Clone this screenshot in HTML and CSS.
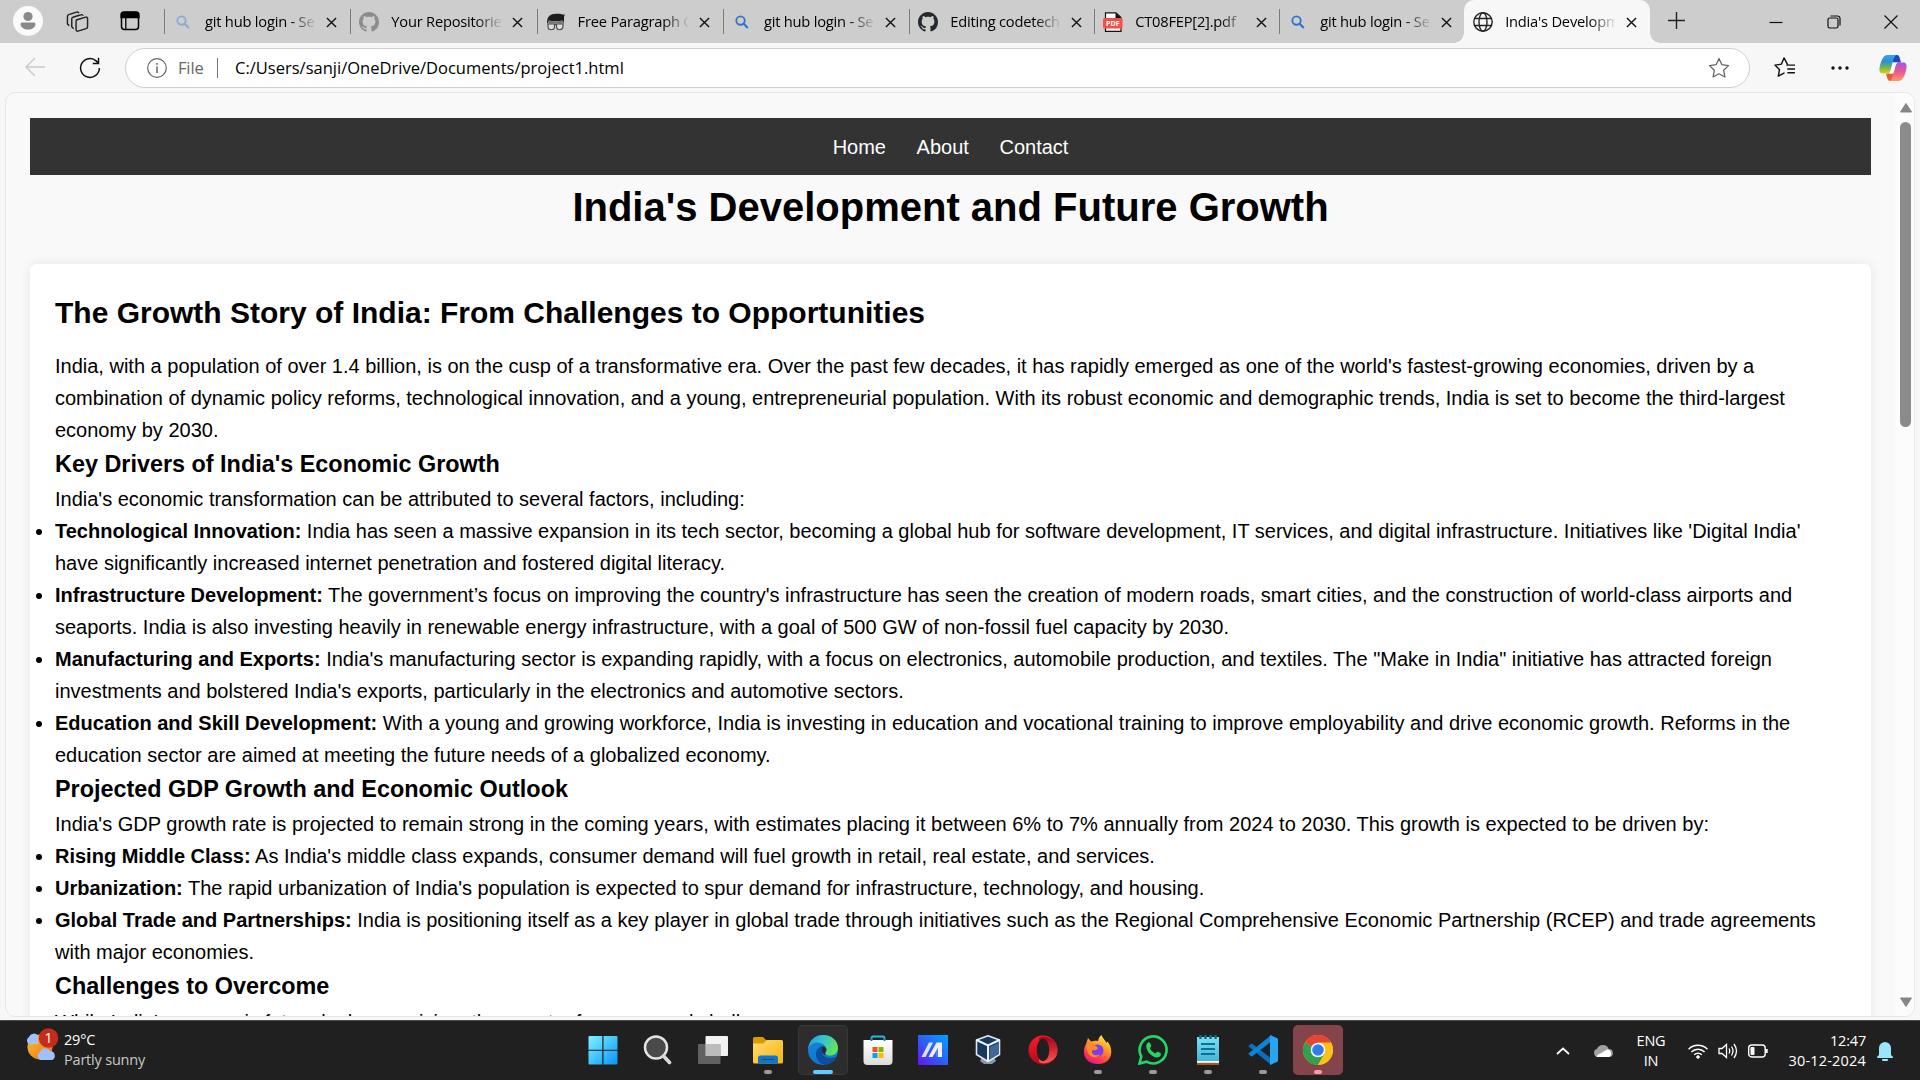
FILE: index.html
```html
<!DOCTYPE html>
<html lang="en">
<head>
<meta charset="utf-8">
<title>India's Development and Future Growth</title>
<link rel="stylesheet" href="styles.css">
</head>
<body>
<svg width="0" height="0" class="defs">
  <defs>
    <linearGradient id="win" x1="0" y1="0" x2="1" y2="1"><stop offset="0" stop-color="#7df3ff"/><stop offset="1" stop-color="#0a93fb"/></linearGradient>
    <linearGradient id="folder" x1="0" y1="0" x2="1" y2="1"><stop offset="0" stop-color="#ffdc74"/><stop offset="1" stop-color="#fbb30a"/></linearGradient>
    <linearGradient id="edgeTop" x1="0" y1="0" x2="1" y2=".4"><stop offset="0" stop-color="#1d9ee0"/><stop offset=".5" stop-color="#35c1d6"/><stop offset="1" stop-color="#62e35a"/></linearGradient>
    <linearGradient id="edgeLow" x1="0" y1="0" x2="0" y2="1"><stop offset="0" stop-color="#1784d8"/><stop offset="1" stop-color="#0a7ad0"/></linearGradient>
    <linearGradient id="asus" x1="0" y1="1" x2="1" y2="0"><stop offset="0" stop-color="#6412f5"/><stop offset=".5" stop-color="#2a62fb"/><stop offset="1" stop-color="#00a2ff"/></linearGradient>
    <linearGradient id="opera" x1="0" y1="0" x2="0" y2="1"><stop offset="0" stop-color="#ff1b2d"/><stop offset="1" stop-color="#b00a18"/></linearGradient>
    <linearGradient id="operaIn" x1="0" y1="0" x2="0" y2="1"><stop offset="0" stop-color="#a60012"/><stop offset="1" stop-color="#ff5656"/></linearGradient>
    <linearGradient id="fox" x1=".8" y1="0" x2=".3" y2="1"><stop offset="0" stop-color="#fff04a"/><stop offset=".4" stop-color="#ff9a28"/><stop offset=".75" stop-color="#ff3d4d"/><stop offset="1" stop-color="#e31587"/></linearGradient>
    <linearGradient id="note" x1="0" y1="0" x2="0" y2="1"><stop offset="0" stop-color="#7fe0f0"/><stop offset="1" stop-color="#41b5d8"/></linearGradient>
    <linearGradient id="bag" x1="0" y1="0" x2="0" y2="1"><stop offset="0" stop-color="#ffffff"/><stop offset="1" stop-color="#dcdcdc"/></linearGradient>
    <linearGradient id="copA" x1="0" y1="0" x2="0" y2="1"><stop offset="0" stop-color="#35a5ee"/><stop offset=".35" stop-color="#2f8cd6"/><stop offset=".65" stop-color="#63b85b"/><stop offset="1" stop-color="#f4c911"/></linearGradient>
    <linearGradient id="copB" x1="0" y1="0" x2="0" y2="1"><stop offset="0" stop-color="#a055ea"/><stop offset=".5" stop-color="#e8598f"/><stop offset="1" stop-color="#ff9c62"/></linearGradient>
    <linearGradient id="sun" x1="0" y1="0" x2="1" y2="1"><stop offset="0" stop-color="#f5c53b"/><stop offset="1" stop-color="#f06b0a"/></linearGradient>
    <symbol id="mag" viewBox="0 0 16 16"><circle cx="6.3" cy="6.3" r="4.8" fill="none" stroke="currentColor" stroke-width="2.100"/><path d="M9.700 9.700 14.600 14.800" stroke="currentColor" stroke-width="2.500"/></symbol>
    <symbol id="octo" viewBox="0 0 16 16"><path fill="currentColor" d="M8 0C3.58 0 0 3.58 0 8c0 3.54 2.29 6.53 5.47 7.59.4.07.55-.17.55-.38 0-.19-.01-.82-.01-1.49-2.01.37-2.53-.49-2.69-.94-.09-.23-.48-.94-.82-1.13-.28-.15-.68-.52-.01-.53.63-.01 1.08.58 1.23.82.72 1.21 1.87.87 2.33.66.07-.52.28-.87.51-1.07-1.78-.2-3.64-.89-3.64-3.95 0-.87.31-1.59.82-2.15-.08-.2-.36-1.02.08-2.12 0 0 .67-.21 2.2.82.64-.18 1.32-.27 2-.27s1.36.09 2 .27c1.53-1.04 2.2-.82 2.2-.82.44 1.1.16 1.92.08 2.12.51.56.82 1.27.82 2.15 0 3.07-1.87 3.75-3.65 3.95.29.25.54.73.54 1.48 0 1.07-.01 1.93-.01 2.2 0 .21.15.46.55.38A8.01 8.01 0 0 0 16 8c0-4.42-3.58-8-8-8z"/></symbol>
    <symbol id="x" viewBox="0 0 12 12"><path d="M1 1 11 11M11 1 1 11" stroke="currentColor" stroke-width="1.5" fill="none"/></symbol>
  </defs>
</svg>

<header class="tabstrip">
  <div class="tools">
    <svg class="avatar" viewBox="0 0 30 30"><circle cx="15" cy="15" r="15" fill="#fafafa"/><circle cx="15" cy="10.500" r="4.600" fill="#8a8a8a"/><path d="M9 16.500h12a1.500 1.500 0 0 1 1.500 1.500c0 3.500-3.500 5.500-7.500 5.500S7.500 21.500 7.500 18A1.500 1.500 0 0 1 9 16.500z" fill="#8a8a8a"/></svg>
    <svg class="collections" viewBox="0 0 24 24" fill="none" stroke="#222" stroke-width="1.500"><path d="M11.500 10.200 20.500 7.500a1.500 1.500 0 0 1 2 1.500v8.500a2 2 0 0 1-1.500 1.900L12.500 22a1.500 1.500 0 0 1-2-1.500v-8.800a1.500 1.500 0 0 1 1-1.500z"/><path d="M8 19.500 6 17.500V9.500a2 2 0 0 1 1.300-2L15.500 5a2 2 0 0 1 2.500 1"/><path d="M3.500 16.500 1.500 14.500V6.800a2 2 0 0 1 1.300-2L11 2.200a2 2 0 0 1 2.500 1"/></svg>
    <svg class="vtabs" viewBox="0 0 20 20"><rect x="1.500" y="1.500" width="17" height="17" rx="3" fill="none" stroke="#000" stroke-width="1.500"/><path d="M1 6.500V4a3 3 0 0 1 3-3h12a3 3 0 0 1 3 3v2.500zM5.800 6v12.500" stroke="#000" stroke-width="1.300"/></svg>
  </div>
  <div class="tab dim"><svg class="fav small"><use href="#mag"/></svg><span class="title">git hub login - Search</span><svg class="close"><use href="#x"/></svg></div>
  <div class="tab grey"><svg class="fav"><use href="#octo"/></svg><span class="title">Your Repositories</span><svg class="close"><use href="#x"/></svg></div>
  <div class="tab"><svg class="fav" viewBox="0 0 20 20"><path d="M1.500 12C0 7 3 2.500 8 2c4-.6 7 .2 11 .8-.8 1.200-1 2-1 3.200.2 2 0 4-.8 6l-.9-3.500C12 9.800 7 9.500 3 8.500z" fill="#1d1d1d"/><path d="M2.500 8.500c5 1.200 9 1.200 13.500 0l.7 3h-14.500z" fill="#777"/><path d="M2 12h6.500v2.500a3.200 3.200 0 0 1-6.500 0zM10.500 12h6.500v2.500a3.200 3.200 0 0 1-6.500 0zM8.500 12.500h2" fill="#ddd" stroke="#4a4a4a" stroke-width="1.200"/></svg><span class="title">Free Paragraph Generator</span><svg class="close"><use href="#x"/></svg></div>
  <div class="tab"><svg class="fav small"><use href="#mag"/></svg><span class="title">git hub login - Search</span><svg class="close"><use href="#x"/></svg></div>
  <div class="tab black"><svg class="fav"><use href="#octo"/></svg><span class="title">Editing codetech</span><svg class="close"><use href="#x"/></svg></div>
  <div class="tab"><svg class="fav" viewBox="0 0 20 20"><path d="M2.500 19.300V.8H13l5 4.700V19.300z" fill="#fff" stroke="#111" stroke-width="1.200"/><path d="M12.500 1v5H18z" fill="#111"/><rect x="0" y="6" width="19.500" height="10.500" rx="1.500" fill="#f2504b"/><text x="9.800" y="14" text-anchor="middle" class="pdf">PDF</text></svg><span class="title">CT08FEP[2].pdf</span><svg class="close"><use href="#x"/></svg></div>
  <div class="tab"><svg class="fav small"><use href="#mag"/></svg><span class="title">git hub login - Search</span><svg class="close"><use href="#x"/></svg></div>
  <div class="tab active"><svg class="fav" viewBox="0 0 20 20" fill="none" stroke="#222" stroke-width="1.400"><circle cx="10" cy="10" r="9.200"/><ellipse cx="10" cy="10" rx="4" ry="9.200"/><path d="M2 6.500h16M2 13.500h16"/></svg><span class="title">India's Development</span><svg class="close"><use href="#x"/></svg></div>
  <svg class="plus" viewBox="0 0 18 18"><path d="M9 0v18M0 9h18" stroke="#222" stroke-width="1.500"/></svg>
  <div class="window">
    <svg viewBox="0 0 14 14"><path d="M.5 7.500h13" stroke="#111" stroke-width="1.200"/></svg>
    <svg viewBox="0 0 14 14" fill="none" stroke="#111" stroke-width="1.200"><rect x="1" y="3" width="10" height="10" rx="1.800"/><path d="M3.500 1h7A2.500 2.500 0 0 1 13 3.500v7"/></svg>
    <svg viewBox="0 0 14 14"><path d="M.5.5l13 13M13.500.5l-13 13" stroke="#111" stroke-width="1.200"/></svg>
  </div>
</header>

<div class="toolbar">
  <svg class="back" viewBox="0 0 20 20" fill="none" stroke="#c9c9c9" stroke-width="1.400"><path d="M20 10H1M10 1 1 10l9 9"/></svg>
  <svg class="reload" viewBox="0 0 22 22" fill="none" stroke="#111" stroke-width="1.500"><path d="M20.400 11a9.400 9.400 0 1 1-3-6.900l2 2M19.500.8V6.500h-5.700"/></svg>
  <div class="address">
    <svg class="info" viewBox="0 0 20 20" fill="none" stroke="#666" stroke-width="1.200"><circle cx="10" cy="10" r="9.300"/><path d="M10 8.500v6.500M10 5v1.800" stroke-width="1.500"/></svg>
    <span class="scheme">File</span><i class="bar"></i><span class="url">C:/Users/sanji/OneDrive/Documents/project1.html</span>
    <svg class="star" viewBox="0 0 22 22" fill="none" stroke="#666" stroke-width="1.300" stroke-linejoin="round"><path d="M11 1.500 13.900 7.700l6.600.9-4.800 4.700 1.200 6.700L11 16.800 5.100 20l1.200-6.700L1.500 8.600l6.600-.9z"/></svg>
  </div>
  <svg class="favs" viewBox="0 0 22 22" fill="none" stroke="#111" stroke-width="1.500" stroke-linejoin="round"><path d="M14 7.500 10.500 1 7.700 7.500 1 8.500 5.800 13.300 4.500 20l6-3.200M13.500 8.500H21.500M14.500 12.500H21.500M14.500 16.500H21.500" stroke-linecap="round"/></svg>
  <svg class="dots" viewBox="0 0 18 4" fill="#111"><circle cx="2" cy="2" r="1.700"/><circle cx="9" cy="2" r="1.700"/><circle cx="16" cy="2" r="1.700"/></svg>
  <svg class="copilot" viewBox="0 0 28 26"><path d="M12 0h6c2 0 2.500 2 3 4l1 3.500h-8z" fill="#1b48c9"/><path d="M7 18.500h8L14 26h-3c-2.500 0-3-4-4-7.500z" fill="#ee5a35"/><path d="M8.500 0H17c-2 1.500-2.700 5-4 10-1.400 5.500-2 8.500-5 8.500H4c-3 0-4-2-3.500-5.500C1.500 8 3.500 0 8.500 0z" fill="url(#copA)"/><path d="M19.500 26H11c2-1.500 2.700-5 4-10 1.400-5.500 2-8.500 5-8.500h4c3 0 4 2 3.500 5.500-1 5-3 13-8 13z" fill="url(#copB)"/><path d="M13.300 9.500c.5-1.500 1.300-2 2.800-2h2.200c-1.500 1.500-2 4-3 8-.5 2-1.300 3-2.800 3h-2c1.300-1.500 1.900-5 2.800-9z" fill="#fff"/></svg>
</div>

<main class="pane">
  <div class="page">
    <nav class="nav"><a>Home</a><a>About</a><a>Contact</a></nav>
    <h1>India's Development and Future Growth</h1>
    <article class="card">
      <h2>The Growth Story of India: From Challenges to Opportunities</h2>
      <p>India, with a population of over 1.4 billion, is on the cusp of a transformative era. Over the past few decades, it has rapidly emerged as one of the world's fastest-growing economies, driven by a combination of dynamic policy reforms, technological innovation, and a young, entrepreneurial population. With its robust economic and demographic trends, India is set to become the third-largest economy by 2030.</p>
      <h3>Key Drivers of India's Economic Growth</h3>
      <p>India's economic transformation can be attributed to several factors, including:</p>
      <ul>
        <li><strong>Technological Innovation:</strong> India has seen a massive expansion in its tech sector, becoming a global hub for software development, IT services, and digital infrastructure. Initiatives like 'Digital India' have significantly increased internet penetration and fostered digital literacy.</li>
        <li><strong>Infrastructure Development:</strong> The government’s focus on improving the country's infrastructure has seen the creation of modern roads, smart cities, and the construction of world-class airports and seaports. India is also investing heavily in renewable energy infrastructure, with a goal of 500 GW of non-fossil fuel capacity by 2030.</li>
        <li><strong>Manufacturing and Exports:</strong> India's manufacturing sector is expanding rapidly, with a focus on electronics, automobile production, and textiles. The "Make in India" initiative has attracted foreign investments and bolstered India's exports, particularly in the electronics and automotive sectors.</li>
        <li><strong>Education and Skill Development:</strong> With a young and growing workforce, India is investing in education and vocational training to improve employability and drive economic growth. Reforms in the education sector are aimed at meeting the future needs of a globalized economy.</li>
      </ul>
      <h3>Projected GDP Growth and Economic Outlook</h3>
      <p>India's GDP growth rate is projected to remain strong in the coming years, with estimates placing it between 6% to 7% annually from 2024 to 2030. This growth is expected to be driven by:</p>
      <ul>
        <li><strong>Rising Middle Class:</strong> As India's middle class expands, consumer demand will fuel growth in retail, real estate, and services.</li>
        <li><strong>Urbanization:</strong> The rapid urbanization of India's population is expected to spur demand for infrastructure, technology, and housing.</li>
        <li><strong>Global Trade and Partnerships:</strong> India is positioning itself as a key player in global trade through initiatives such as the Regional Comprehensive Economic Partnership (RCEP) and trade agreements with major economies.</li>
      </ul>
      <h3>Challenges to Overcome</h3>
      <p>While India's economic future looks promising, the country faces several challenges:</p>
    </article>
  </div>
  <div class="scroll">
    <svg viewBox="0 0 12 10"><path d="M6 .5 11.500 9H.5z" fill="#868686" stroke="#868686" stroke-linejoin="round"/></svg>
    <i class="thumb"></i>
    <svg class="down" viewBox="0 0 12 10"><path d="M6 9.500 11.500 1H.5z" fill="#868686" stroke="#868686" stroke-linejoin="round"/></svg>
  </div>
</main>

<footer class="taskbar">
  <div class="weather">
    <svg viewBox="0 0 34 34"><circle cx="15" cy="19" r="12.500" fill="url(#sun)"/><path d="M4 16a4 4 0 0 1 0-7 5 5 0 0 1 9-1v8z" fill="#9fc3fa"/><path d="M15 32a4.500 4.500 0 0 1 0-8 5.500 5.500 0 0 1 10-1 4.700 4.700 0 0 1 2 9z" fill="#9fc0fb"/><circle cx="23.500" cy="10" r="9.800" fill="#c42b1c"/><text x="23.500" y="15" text-anchor="middle" class="badge">1</text></svg>
    <div><b>29°C</b><span>Partly sunny</span></div>
  </div>
  <div class="apps">
    <div class="app"><svg viewBox="0 0 30 30" fill="url(#win)"><path d="M.5 2a1 1 0 0 1 1-1H14.300V14.700H.5zM15.500 1H28.500a1 1 0 0 1 1 1V14.700h-14zM.5 15.800H14.300V29.500H1.500a1 1 0 0 1-1-1zM15.500 15.800h14V28.500a1 1 0 0 1-1 1h-13z"/></svg></div>
    <div class="app"><svg viewBox="0 0 30 30"><circle cx="13" cy="12.500" r="11" fill="#4a4a4a" stroke="#e4e4e4" stroke-width="2.500"/><path d="M20.500 21 26.500 27.500" stroke="#d5dade" stroke-width="3.600" stroke-linecap="round"/></svg></div>
    <div class="app"><svg viewBox="0 0 30 30"><rect x="7.500" y="1" width="22.500" height="20" rx="1" fill="#f2f2f2"/><rect x="0" y="9" width="22.500" height="20" rx="1" fill="#777" fill-opacity=".75"/><path d="M7.500 9h15v12h-15z" fill="#bcbcbc"/></svg></div>
    <div class="app run"><svg viewBox="0 0 30 30"><path d="M0 3.500A1.500 1.500 0 0 1 1.500 2H10l3 3v5H0z" fill="#dc9900"/><path d="M0 8.500h10.500L13.500 5H28.500A1.500 1.500 0 0 1 30 6.500V27a1.500 1.500 0 0 1-1.500 1.500h-27A1.500 1.500 0 0 1 0 27z" fill="url(#folder)"/><path d="M5 28.500V23a2.500 2.500 0 0 1 2.500-2.500h15A2.500 2.500 0 0 1 25 23v5.500z" fill="#0a78cc"/><path d="M9 24.500h12" stroke="#064f93" stroke-width="1.200"/></svg></div>
    <div class="app current"><svg viewBox="0 0 30 30"><circle cx="15" cy="15" r="15" fill="url(#edgeLow)"/><path d="M.2 14C1 5 7.500 0 15 0c9 0 15 6 15 13 0 5-4 7.500-8 7.500-4.500 0-6-1.500-4.500-3.500C20 13 16 7.500 9.500 7.500 5 7.500 1.500 10 .2 14z" fill="url(#edgeTop)"/><path d="M14 11.300c-4 1-6.500 4.700-6 9 .6 4.500 4 8.500 8.500 9.500 5-.5 9-3.500 11-7.300.3-.8-.3-.8-.8-.5-4.500 2.300-11 .5-12.500-3.500-1-2.500-.4-5.500-.2-7.200z" fill="#0e4c9d"/><path d="M14 11.300c3.300-.3 6 3 3.700 5.700-1 1.500-.6 2.500 1 3.200-4 .3-6-4.500-4.700-8.900z" fill="#202c38"/></svg></div>
    <div class="app"><svg viewBox="0 0 30 30"><path d="M8.500 6V3A1.500 1.500 0 0 1 10 1.500H20A1.500 1.500 0 0 1 21.500 3v3" fill="none" stroke="#25b6ea" stroke-width="1.800"/><path d="M.5 5h29V26a4 4 0 0 1-4 4h-21a4 4 0 0 1-4-4z" fill="url(#bag)"/><path d="M8.500 6V3.500M21.500 6V3.500" stroke="#0f7db4" stroke-width="1.800"/><path d="M9.500 12h5v5h-5z" fill="#f25022"/><path d="M15.500 12h5v5h-5z" fill="#7fba00"/><path d="M9.500 18h5v5h-5z" fill="#00a4ef"/><path d="M15.500 18h5v5h-5z" fill="#ffb900"/></svg></div>
    <div class="app"><svg viewBox="0 0 30 30"><path d="M0 0h30v30H0z" fill="url(#asus)"/><path d="M3.500 22 11 7.500h4L7.500 22z" fill="#dfe2ff"/><path d="M10.500 22 18.500 7.500H24V22h-4v-9L14.500 22z" fill="#eef0ff"/><path d="M20 13v9h-1.500l-1-4.500z" fill="#5d7bff"/></svg></div>
    <div class="app"><svg viewBox="0 0 30 30"><path d="M9 22h12l2 4-4 3h-8l-4-3z" fill="#8796ad"/><path d="M15 .8 26.500 5v14.500L15 26.500 3.500 19.500V5z" fill="#17375f" stroke="#dfe8f3" stroke-width="1.600" stroke-linejoin="round"/><path d="M3.500 5 15 10.500 26.500 5M15 10.500v16" fill="none" stroke="#eef3fa" stroke-width="2"/><path d="M16.500 12 25.700 7.500V19l-9.200 5.500z" fill="#416796"/></svg></div>
    <div class="app"><svg viewBox="0 0 30 30"><ellipse cx="15" cy="15" rx="14.500" ry="14.500" fill="url(#opera)"/><path d="M11 3C17-1 29 4 29.500 15S17 31 11 27z" fill="url(#operaIn)"/><ellipse cx="15" cy="15" rx="6.300" ry="11.300" fill="#202020"/></svg></div>
    <div class="app run"><svg viewBox="0 0 30 30"><path d="M3 9 5 3l3 3.500c3-1 5-1 7-.5.5-3 2-5 3.500-6 .5 3 4 5 5 8l1-1.500C31 14 30 29 15 29 2 29-2 18 3 9z" fill="url(#fox)"/><circle cx="14.500" cy="15.500" r="6" fill="#7b3df0"/><path d="M4 9.500c4-2 8 .5 11 3.500-1 2.500-4 2-6 2.500-1 4 4 6 8 4-4 6-15 2-13-10z" fill="#ff8a2a"/></svg></div>
    <div class="app run"><svg viewBox="0 0 30 30"><path d="M1.500 28.500 3.300 21.500A13.500 13.500 0 1 1 8.500 26.700z" fill="#202020" stroke="#25d366" stroke-width="2.600"/><path d="M9.500 8c1-1 2.300-.8 2.800.4l1 2.400c.2.8-.8 1.600-1.400 2.400 1 2.300 3 4.200 5.500 5.200.8-.8 1.500-2 2.400-1.700l2.700 1.300c1 .6.300 3-1 3.800-3 1.800-7-.3-9.500-2.800C9.500 16.500 6.500 11.500 9.500 8z" fill="#25d366"/></svg></div>
    <div class="app run"><svg viewBox="0 0 30 30"><path d="M4 27h22v3H4z" fill="#a4581c"/><path d="M4 24h22v3.800H4z" fill="#fff"/><path d="M4 2h22v24H4z" fill="url(#note)"/><path d="M7.500 0v4M12.500 0v4M17.500 0v4M22.500 0v4" stroke="#0b6c8c" stroke-width="2.400"/><path d="M8 9h14M8 14h14M8 19h14" stroke="#0c6f92" stroke-width="1.800"/></svg></div>
    <div class="app run"><svg viewBox="0 0 30 30"><path d="M1 10.500 3 8.800a1 1 0 0 1 1.300 0L24 24v5.500l-2-.5L.8 11.800a.8.8 0 0 1 .2-1.300z" fill="#0a6fbc"/><path d="M1 19.500 3 21.200a1 1 0 0 0 1.300 0L24 6V.5l-2 .5L.8 18.200a.8.8 0 0 0 .2 1.300z" fill="#0a86d8"/><path d="M22 0 28.800 3A2 2 0 0 1 30 5V25a2 2 0 0 1-1.200 2L22 30z" fill="#27a5f2"/></svg></div>
    <div class="app run hot"><svg viewBox="0 0 30 30"><circle cx="15" cy="15" r="15" fill="#fbc116"/><path d="M15 15 2 7.500A15 15 0 0 1 28 7.500z" fill="#ea4335"/><path d="M2 7.500A15 15 0 0 0 15 30l6.500-11.300L15 15z" fill="#34a04d"/><path d="M28 7.500H15V15l6.500 3.700L15 30A15 15 0 0 0 28 7.500z" fill="#fbc116"/><circle cx="15" cy="15" r="7.300" fill="#fff"/><circle cx="15" cy="15" r="5.800" fill="#317df0"/></svg></div>
  </div>
  <div class="tray">
    <svg class="chev" viewBox="0 0 14 8"><path d="M1 7 7 1.500 13 7" fill="none" stroke="#fff" stroke-width="1.700"/></svg>
    <svg class="cloud" viewBox="0 0 20 14"><path d="M4.500 13a4.300 4.300 0 0 1-.5-8.300A6.500 6.500 0 0 1 15.800 5 4 4 0 0 1 16 13z" fill="#a0a0a0"/><path d="M3.500 13c0-2 2-3 4-3.500L14 5.500a4 4 0 0 1 2 7.500z" fill="#fff"/></svg>
    <div class="lang">ENG<br>IN</div>
    <svg class="wifi" viewBox="0 0 20 16" fill="none" stroke="#fff" stroke-width="1.500"><path d="M.6 6.200a13.300 13.300 0 0 1 18.800 0M3.400 9a9.300 9.300 0 0 1 13.200 0M6.200 11.800a5.400 5.400 0 0 1 7.600 0"/><circle cx="10" cy="14" r="1.300" fill="#fff" stroke-width="1"/></svg>
    <svg class="sound" viewBox="0 0 21 18" fill="none" stroke="#fff" stroke-width="1.300"><path d="M1 6.500h3L8.500 2.500v13L4 11.500H1z"/><path d="M11 6.500q1.500 2.500 0 5M13.500 4.500q3 4.500 0 9M16 2q5 7 0 14"/></svg>
    <svg class="battery" viewBox="0 0 20 14"><rect x=".7" y="1" width="16.500" height="12" rx="3" fill="none" stroke="#fff" stroke-width="1.400"/><rect x="2.500" y="3" width="4" height="8" rx="1" fill="#fff"/><path d="M18.500 5v4" stroke="#fff" stroke-width="2.400"/></svg>
    <div class="clock">12:47<br><span>30-12-2024</span></div>
    <svg class="bell" viewBox="0 0 16 20" fill="#99e6fb"><path d="M2 14V7a6 6 0 0 1 12 0v7l1.800 1.500V17H.2v-1.500z"/><path d="M5 18h6a3 3 0 0 1-6 0z"/></svg>
  </div>
</footer>
</body>
</html>
```
FILE: styles.css
```css
* { box-sizing: border-box; margin: 0; padding: 0; }
body { width: 1920px; height: 1080px; overflow: hidden; display: flex; flex-direction: column; background: #f7f7f7; font-family: "Open Sans", "Noto Sans", sans-serif; color: #000; }
svg { flex: none; display: block; }
.defs { position: absolute; }

.tabstrip { height: 43px; flex: none; background: #cdcdcd; display: flex; }
.tools { width: 164px; flex: none; display: flex; align-items: center; }
.avatar { width: 30px; height: 30px; margin: 0 0 1px 13px; }
.collections { width: 23px; height: 23px; margin: 0 0 1px 23px; }
.vtabs { width: 20px; height: 20px; margin: 0 0 1px 31px; }
.tab { width: 186.3px; flex: none; display: flex; align-items: center; padding-left: 13px; position: relative; color: #3273cf; }
.black, .black ~ .tab { width: 185px; }
.tabstrip .active { width: 186px; }
.tab::before { content: ""; position: absolute; left: 0; top: 9px; width: 1px; height: 25px; background: #7b7b7b; }
.fav { width: 20px; height: 20px; margin: 0 0 0 -4px; }
.fav.small { width: 14px; height: 14px; margin: 0 3px 0 -1px; }
.dim { color: #8ca9d8; }
.grey { color: #8b8c8f; }
.black { color: #23292f; }
.title { width: 110px; margin: 0 0 2px 12px; white-space: nowrap; overflow: hidden; font-size: 14.7px; letter-spacing: -.22px; line-height: 24px; color: #000; -webkit-mask-image: linear-gradient(90deg, #000 85px, transparent 112px); mask-image: linear-gradient(90deg, #000 85px, transparent 112px); }
.close { width: 11px; height: 11px; margin: 1px 0 0 11px; color: #111; }
.active { background: #f7f7f7; border-radius: 10px 10px 0 0; }
.active::before { left: -10px; top: auto; bottom: 0; width: 10px; height: 10px; background: radial-gradient(circle at 0 0, #cdcdcd 9.5px, #f7f7f7 10px); }
.active::after { content: ""; position: absolute; right: -10px; bottom: 0; width: 10px; height: 10px; background: radial-gradient(circle at 100% 0, #cdcdcd 9.5px, #f7f7f7 10px); }
.pdf { font: 700 7px "Open Sans", sans-serif; fill: #fff; }
.plus { width: 17px; height: 17px; margin: 12px 0 0 18px; }
.window { margin-left: auto; display: flex; align-items: center; gap: 43.5px; padding-right: 22px; }
.window svg { width: 14px; height: 14px; }

.toolbar { height: 49px; flex: none; display: flex; align-items: center; }
.back { width: 20px; height: 20px; margin: 0 0 1px 25px; }
.reload { width: 22px; height: 22px; margin-left: 34px; }
.address { width: 1625px; height: 40px; margin-left: 24px; border: 1px solid #cfcfcf; border-radius: 20px; background: #fff; display: flex; align-items: center; }
.info { width: 20px; height: 20px; margin-left: 21px; }
.scheme { margin-left: 11px; font-size: 16.5px; letter-spacing: -.15px; color: #666; width: 27px; }
.bar { width: 1px; height: 20px; background: #777; margin-left: 12px; }
.url { margin-left: 17px; font-size: 16.5px; letter-spacing: .01px; white-space: nowrap; }
.star { width: 22px; height: 22px; margin: 0 19px 0 auto; }
.favs { width: 21px; height: 21px; margin-left: 24px; }
.dots { width: 18px; height: 4px; margin-left: 36px; }
.copilot { width: 28px; height: 26px; margin-left: 30px; }

.pane { width: 1910px; height: 925px; flex: none; margin: 0 0 3px 5px; border: 1px solid #e7e7e7; border-radius: 10px; background: #f9f9f9; display: flex; overflow: hidden; }
.page { width: 1889px; flex: none; padding: 25px 24px; font: 20px/1.6 "Liberation Sans", Arial, sans-serif; }
.nav { height: 57px; background: #333; color: #fff; display: flex; justify-content: center; align-items: center; gap: 30.6px; }
h1 { font-size: 40px; text-align: center; margin-bottom: 25px; }
.card { background: #fff; border-radius: 6px; padding: 25px; box-shadow: 0 0 12px rgba(0,0,0,.08); }
h2 { font-size: 30px; margin-bottom: 12.5px; }
h3 { font-size: 23.4px; }
.scroll { width: 19px; background: #fcfcfc; display: flex; flex-direction: column; align-items: center; padding: 10px 0 9px 2px; }
.scroll svg { width: 12px; height: 10px; }
.thumb { width: 11px; height: 305px; margin-top: 9px; border-radius: 6px; background: #8b8b8b; }
.scroll .down { margin-top: auto; }

.taskbar { height: 60px; flex: none; background: #202020; border-top: 1px solid #4a4a4a; display: grid; grid-template-columns: 577px 1fr 400px; color: #fff; }
.weather { display: flex; padding: 7px 0 0 25px; font-size: 14.5px; line-height: 20px; letter-spacing: -.2px; }
.weather svg { width: 34px; height: 34px; }
.weather div { display: flex; flex-direction: column; margin-left: 5px; padding-top: 2px; }
.weather b { font-weight: 400; letter-spacing: -.2px; }
.weather span { color: #c8c8c8; }
.badge { font: 14px "Open Sans", sans-serif; fill: #fff; }
.apps { display: flex; gap: 5px; padding: 4px 0 0 1px; }
.app { width: 50px; height: 50px; flex: none; border-radius: 5px; padding: 10px; position: relative; }
.app svg { width: 30px; height: 30px; }
.run::after, .current::after { content: ""; position: absolute; left: 21px; bottom: 1px; width: 8px; height: 4px; border-radius: 2px; background: #9a9a9a; }
.current { background: #2d2d2d; box-shadow: inset 0 0 0 1px #383838; }
.current::after { left: 15px; width: 20px; background: #60cdff; }
.hot { background: #85444a; }
.hot::after { background: #ff9ba6; }
.tray { display: flex; align-items: center; font-size: 14.5px; line-height: 20px; letter-spacing: -.2px; }
.chev { width: 14px; height: 8px; margin-left: 36px; }
.cloud { width: 20px; height: 14px; margin-left: 23px; }
.lang { width: 40px; text-align: center; margin-left: 18px; letter-spacing: -.2px; }
.wifi { width: 20px; height: 16px; margin-left: 17px; }
.sound { width: 21px; height: 18px; margin-left: 10px; }
.battery { width: 20px; height: 14px; margin-left: 9px; }
.clock { width: 90px; text-align: right; margin-left: 8px; white-space: nowrap; }
.clock span { letter-spacing: .18px; }
.bell { width: 16px; height: 20px; margin-left: 11px; }
```
